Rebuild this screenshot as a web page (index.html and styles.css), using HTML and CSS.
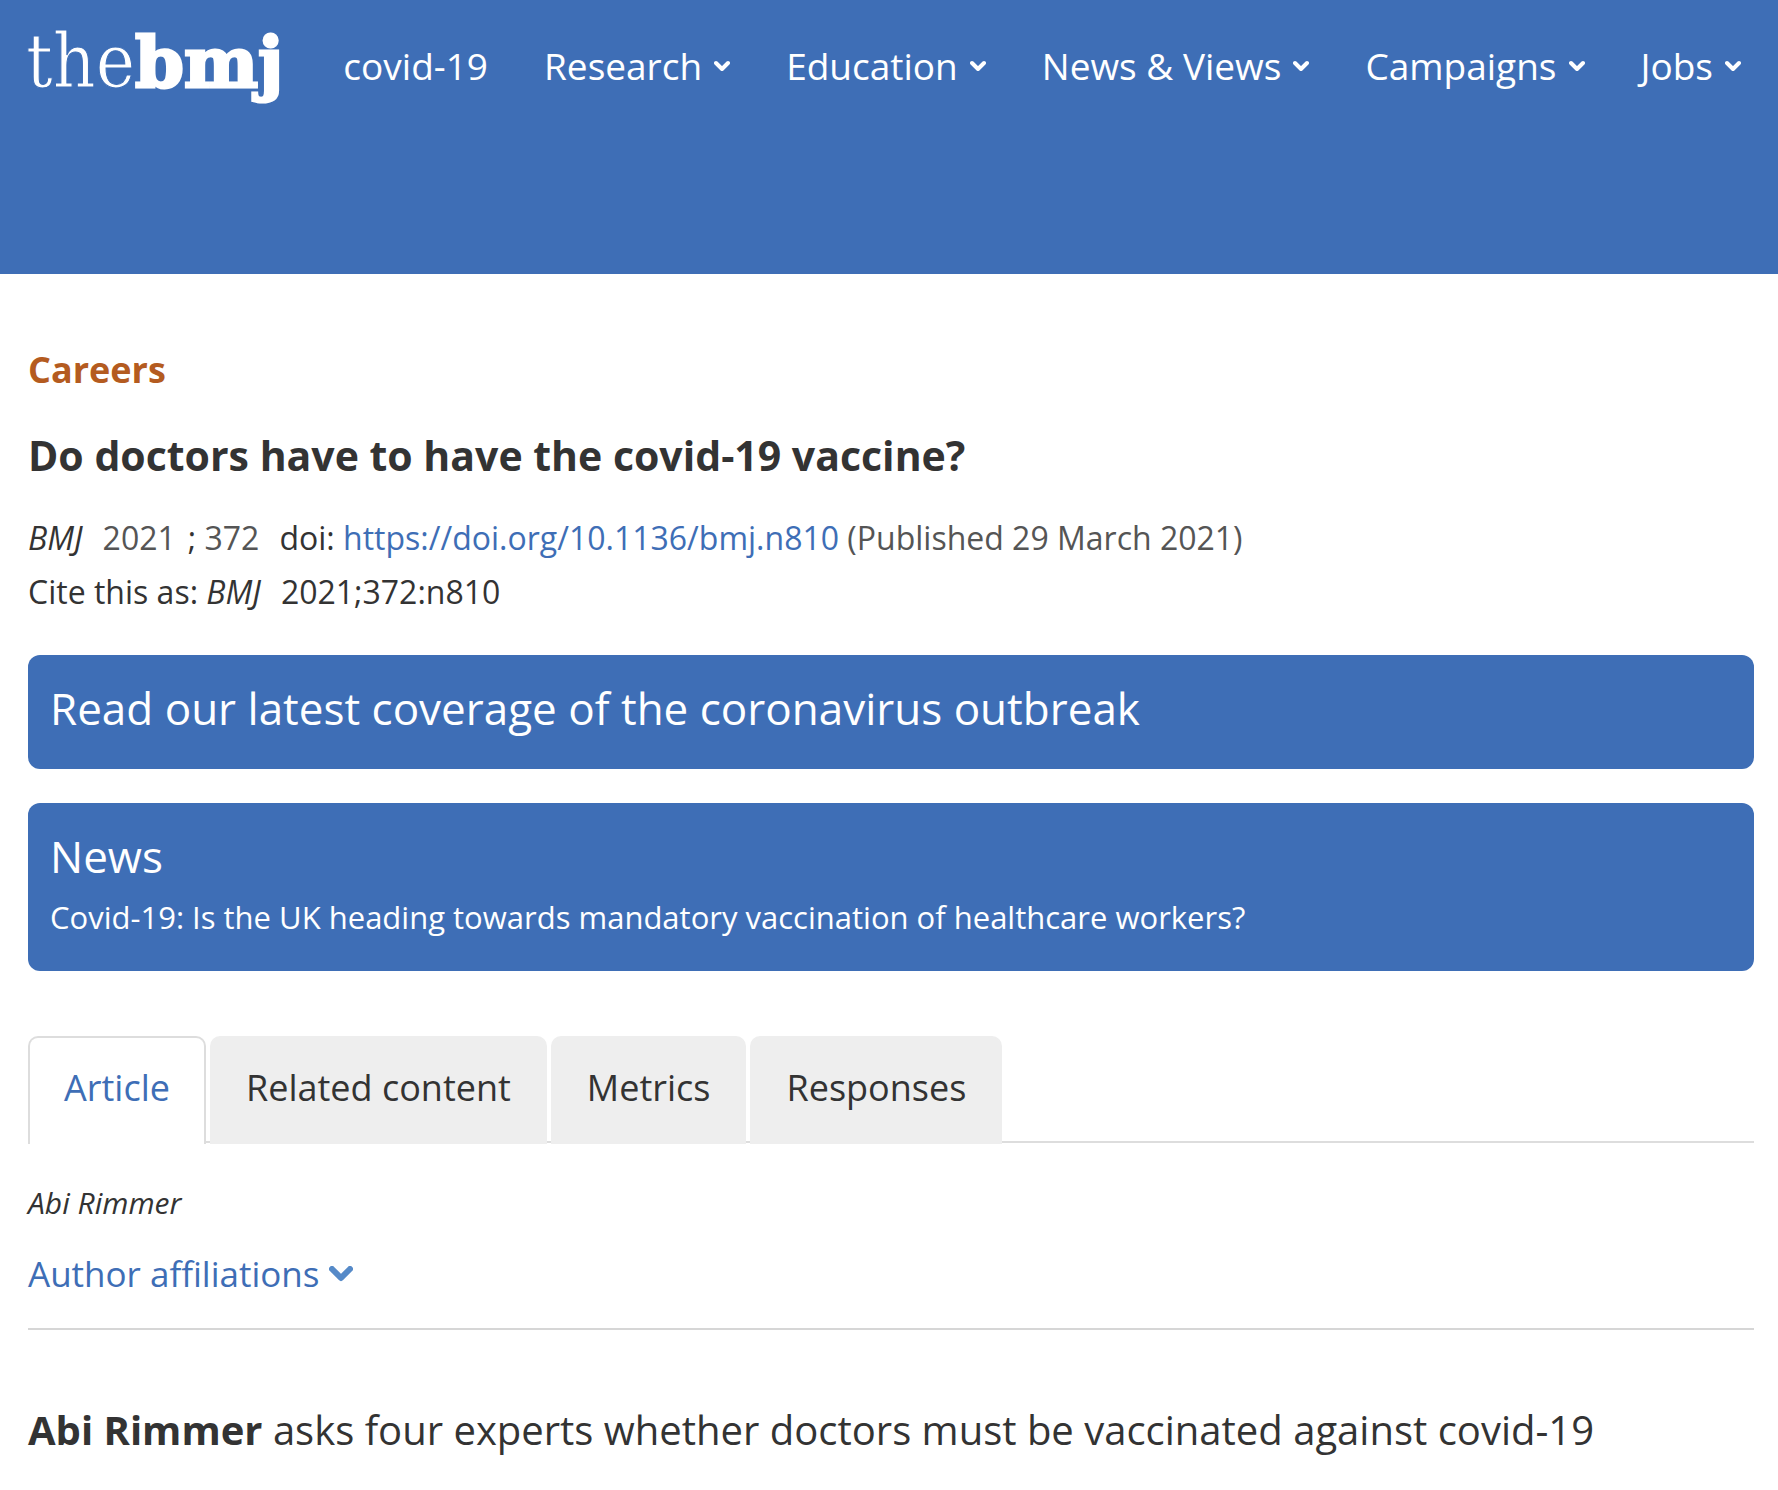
FILE: index.html
```html
<!DOCTYPE html>
<html lang="en">
<head>
    <meta charset="UTF-8">
    <meta name="viewport" content="width=device-width, initial-scale=1.0">
    <title>Do doctors have to have the covid-19 vaccine? | The BMJ</title>
    <link rel="stylesheet" href="styles.css">
</head>
<body>
    <header class="site-header">
        <a class="logo" href="#"><span class="logo-the">the</span><span class="logo-bmj">bmj</span></a>
        <nav class="main-nav">
            <a href="#">covid-19</a>
            <a href="#">Research <svg class="chevron" viewBox="0 0 16 12"><path d="M2 3 L8 9 L14 3"/></svg></a>
            <a href="#">Education <svg class="chevron" viewBox="0 0 16 12"><path d="M2 3 L8 9 L14 3"/></svg></a>
            <a href="#">News &amp; Views <svg class="chevron" viewBox="0 0 16 12"><path d="M2 3 L8 9 L14 3"/></svg></a>
            <a href="#">Campaigns <svg class="chevron" viewBox="0 0 16 12"><path d="M2 3 L8 9 L14 3"/></svg></a>
            <a href="#">Jobs <svg class="chevron" viewBox="0 0 16 12"><path d="M2 3 L8 9 L14 3"/></svg></a>
        </nav>
    </header>

    <main class="article">
        <p class="section-name">Careers</p>
        <h1 class="title">Do doctors have to have the covid-19 vaccine?</h1>

        <div class="citation">
            <p><cite class="journal">BMJ</cite><span class="year">2021</span><span>; </span><span class="volume">372</span>doi: <a href="#">https://doi.org/10.1136/bmj.n810</a> <span class="published">(Published 29 March 2021)</span></p>
            <p>Cite this as: <cite class="journal">BMJ</cite>2021;372:n810</p>
        </div>

        <a class="callout" href="#">
            <h2>Read our latest coverage of the coronavirus outbreak</h2>
        </a>
        <a class="callout" href="#">
            <h2>News</h2>
            <p>Covid-19: Is the UK heading towards mandatory vaccination of healthcare workers?</p>
        </a>

        <ul class="tabs">
            <li><a class="tab active" href="#">Article</a></li>
            <li><a class="tab" href="#">Related content</a></li>
            <li><a class="tab" href="#">Metrics</a></li>
            <li><a class="tab" href="#">Responses</a></li>
        </ul>

        <p class="author">Abi Rimmer</p>
        <button class="affiliations" type="button">Author affiliations <svg viewBox="0 0 24 16"><path d="M3 3 L12 12 L21 3"/></svg></button>

        <p class="standfirst"><strong>Abi Rimmer</strong> asks four experts whether doctors must be vaccinated against covid-19</p>
    </main>
</body>
</html>
```

FILE: styles.css
```css
* {
    box-sizing: border-box;
}

body {
    margin: 0;
    background-color: #fff;
    color: #333;
    font-family: "Open Sans", "Noto Sans", sans-serif;
}

h1, h2, p, ul {
    margin: 0;
    padding: 0;
}

a {
    color: #3e6eb6;
    text-decoration: none;
}

/* Header */
.site-header {
    display: flex;
    align-items: flex-start;
    gap: 60px;
    min-height: 274px;
    padding: 21px 26px;
    background-color: #3e6eb6;
}

.logo {
    color: #fff;
    font-family: "DejaVu Serif", serif;
    font-size: 70px;
    line-height: 80px;
    white-space: nowrap;
}

.logo-the {
    font-family: "DejaVu Serif Condensed", "DejaVu Serif", serif;
    font-size: 74px;
    -webkit-text-stroke: 1px #3e6eb6;
}

.logo-bmj {
    font-weight: bold;
    -webkit-text-stroke: 3px #fff;
}

.main-nav {
    display: flex;
    gap: 56px;
    padding-top: 21px;
}

.main-nav a {
    display: flex;
    align-items: center;
    gap: 12px;
    color: #fff;
    font-size: 37px;
    line-height: 48px;
    white-space: nowrap;
}

.chevron {
    width: 16px;
    height: 12px;
}

.chevron path {
    fill: none;
    stroke: #fff;
    stroke-width: 4;
    stroke-linecap: round;
    stroke-linejoin: round;
}

/* Article heading */
.article {
    padding: 72px 24px 32px 28px;
}

.section-name {
    color: #b45b20;
    font-size: 36px;
    font-weight: bold;
    line-height: 48px;
}

.title {
    margin-top: 33px;
    font-size: 41px;
    line-height: 56px;
}

.citation {
    margin: 28px 0 36px;
    font-size: 32px;
    line-height: 54px;
}

.journal,
.volume {
    margin-right: 20px;
}

.year {
    margin-right: 12px;
}

.year,
.volume,
.published {
    color: #555;
}

/* Blue boxes */
.callout {
    display: block;
    margin-bottom: 34px;
    padding: 19px 22px 27px;
    border-radius: 12px;
    background-color: #3e6eb6;
    color: #fff;
}

.callout h2 {
    font-size: 44px;
    font-weight: normal;
    line-height: 68px;
}

.callout p {
    font-size: 31px;
    line-height: 54px;
}

/* Tabs */
.tabs {
    display: flex;
    gap: 4px;
    margin-top: 65px;
    border-bottom: 2px solid #ddd;
    list-style: none;
}

.tabs li {
    margin-bottom: -3px;
}

.tab {
    display: block;
    padding: 26px 34px 32px;
    border: 2px solid #eee;
    border-bottom: 0;
    border-radius: 10px 10px 0 0;
    background-color: #eee;
    color: #333;
    font-size: 36px;
    line-height: 48px;
}

.tab.active {
    border-color: #ddd;
    background-color: #fff;
    color: #3e6eb6;
}

/* Authors */
.author {
    margin-top: 40px;
    font-size: 30px;
    font-style: italic;
    line-height: 40px;
}

.affiliations {
    display: flex;
    align-items: center;
    gap: 10px;
    width: 100%;
    margin-top: 27px;
    padding: 0 0 30px;
    border: 0;
    border-bottom: 2px solid #d6d6d6;
    background: none;
    color: #3e6eb6;
    font-family: inherit;
    font-size: 35px;
    line-height: 48px;
    cursor: pointer;
}

.affiliations svg {
    width: 24px;
    height: 16px;
}

.affiliations path {
    fill: none;
    stroke: #568ac8;
    stroke-width: 6;
    stroke-linecap: round;
    stroke-linejoin: round;
}

.standfirst {
    margin-top: 70px;
    font-size: 40px;
    line-height: 60px;
}
```
